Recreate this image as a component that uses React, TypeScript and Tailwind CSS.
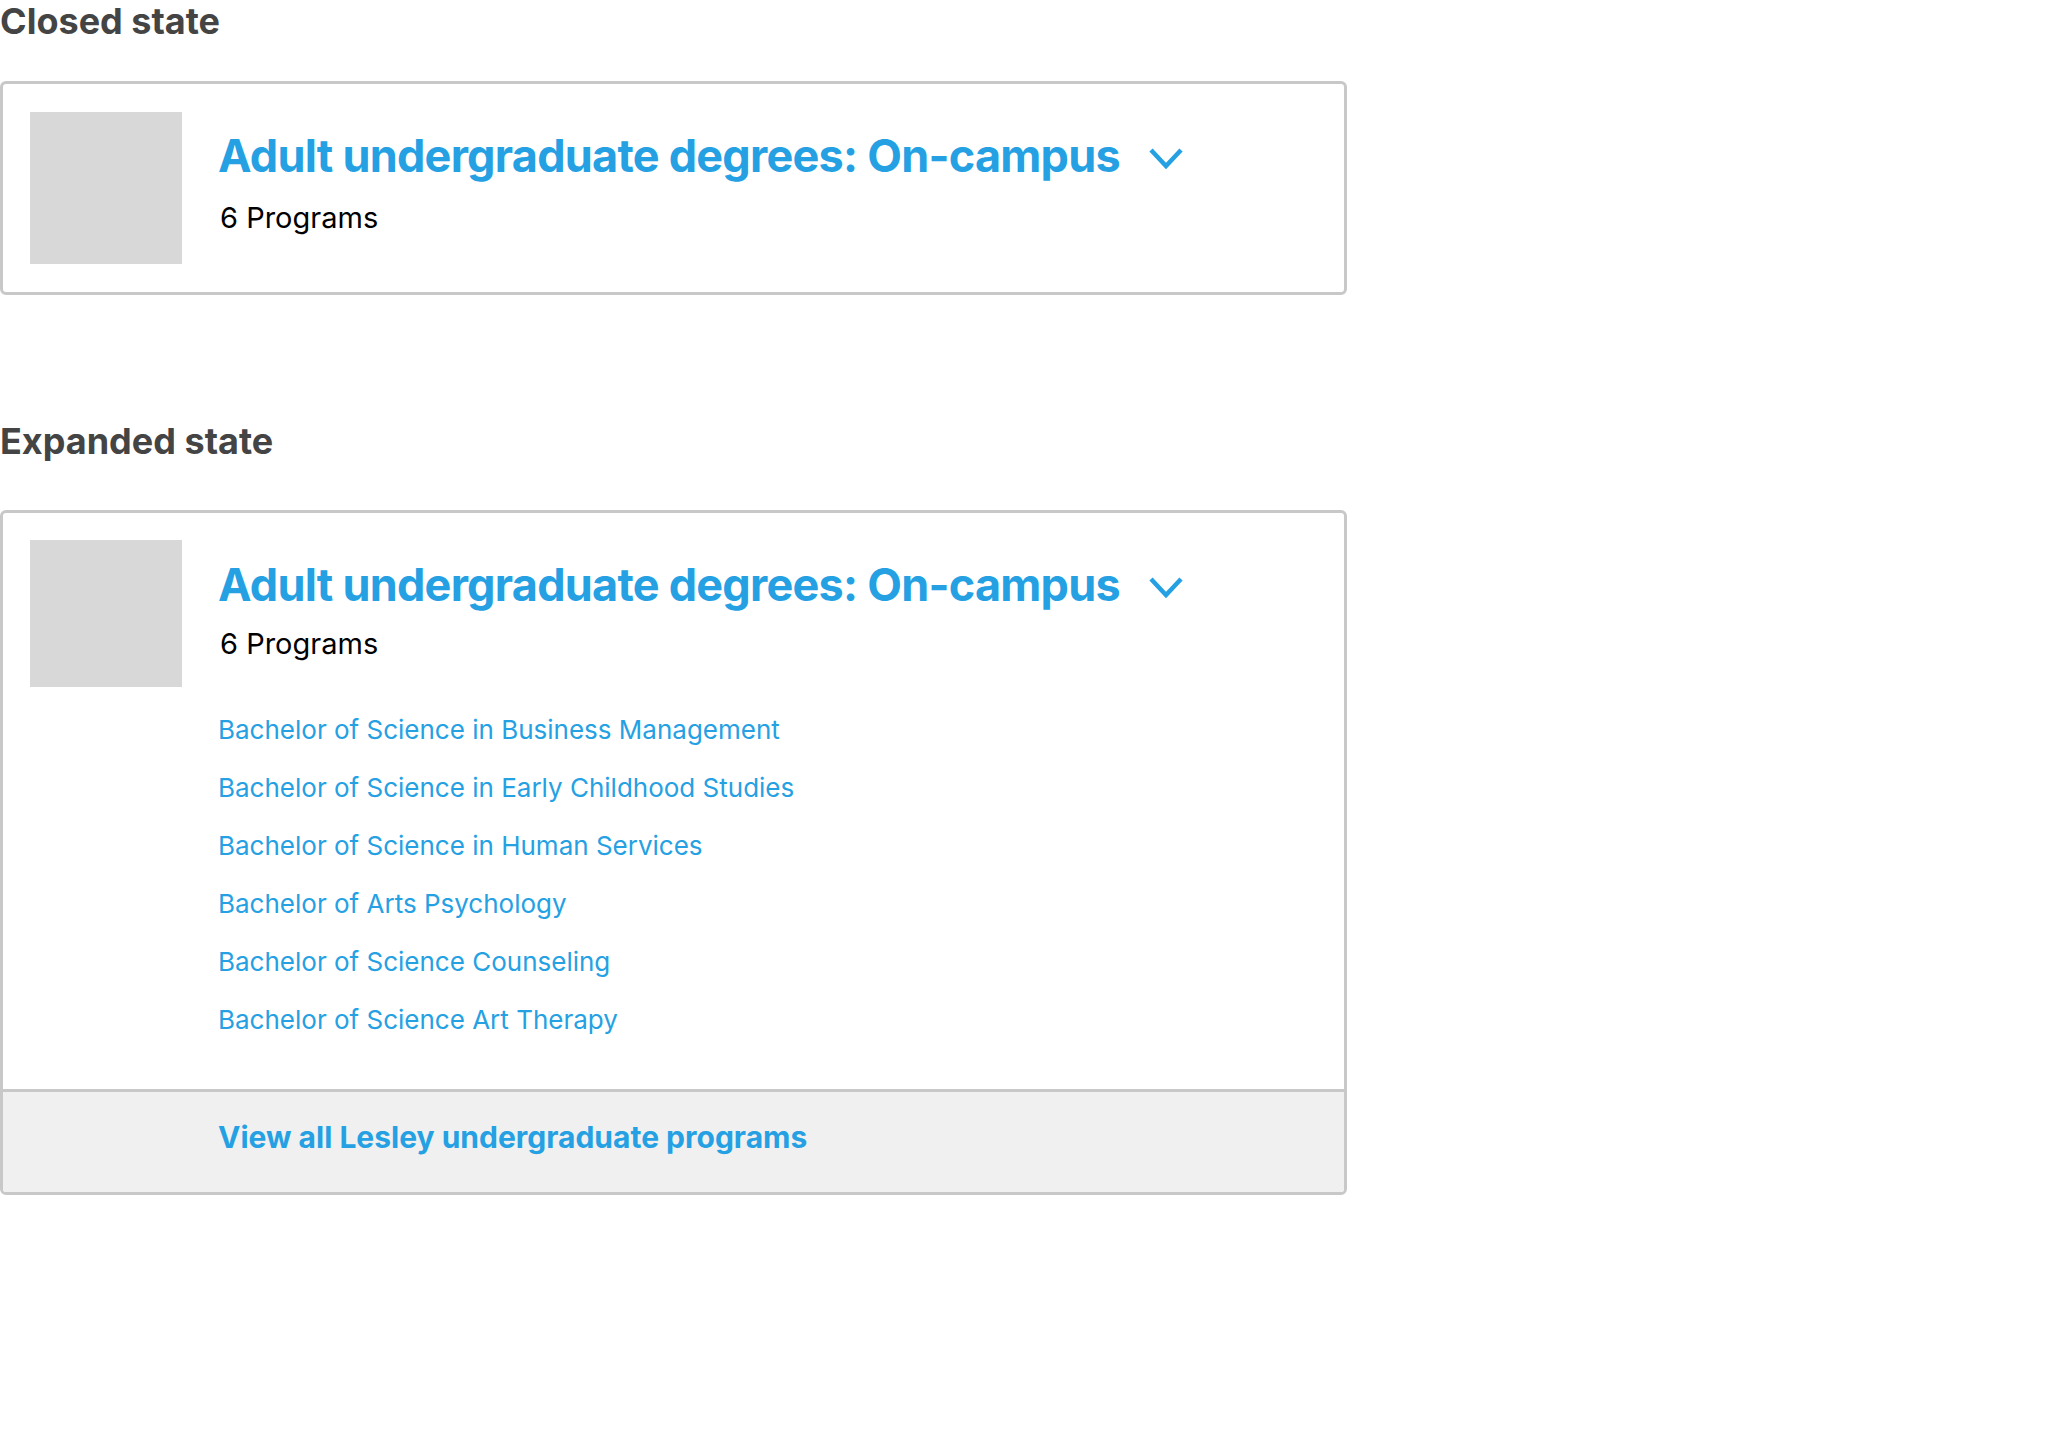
import React from "react";

const BLUE = "text-[#25a1e3]";

function Chevron() {
  return (
    <svg
      width="36"
      height="22"
      viewBox="0 0 36 22"
      className="ml-[28px] mt-[3px] shrink-0"
      fill="none"
    >
      <path
        d="M3 3 L18 19 L33 3"
        stroke="#25a1e3"
        strokeWidth="4.5"
        strokeLinecap="butt"
        strokeLinejoin="miter"
      />
    </svg>
  );
}

function Header({ titleMt, programsMt }: { titleMt: string; programsMt: string }) {
  return (
    <>
      <div className={`flex items-center ${titleMt}`}>
        <h3 className={`text-[45px] leading-[54px] font-bold ${BLUE} tracking-[-0.75px]`}>
          Adult undergraduate degrees: On-campus
        </h3>
        <Chevron />
      </div>
      <p className={`text-[29px] leading-[34px] text-black pl-[2px] ${programsMt}`}>6 Programs</p>
    </>
  );
}

const programs = [
  "Bachelor of Science in Business Management",
  "Bachelor of Science in Early Childhood Studies",
  "Bachelor of Science in Human Services",
  "Bachelor of Arts Psychology",
  "Bachelor of Science Counseling",
  "Bachelor of Science Art Therapy",
];

export default function App() {
  return (
    <div
      className="min-h-screen bg-white"
      style={{ fontFamily: "Inter, 'Noto Sans', sans-serif" }}
    >
      <h2 className="text-[36px] leading-[43px] font-bold text-[#444444]">Closed state</h2>

      <div className="mt-[38px] w-[1347px] rounded-[6px] border-[3px] border-[#c8c8c8] bg-white">
        <div className="flex pl-[27px] pt-[28px] pb-[28px]">
          <div className="w-[152px] h-[152px] bg-[#d8d8d8] shrink-0" />
          <div className="ml-[36px] flex flex-col">
            <Header titleMt="mt-[17px]" programsMt="mt-[18px]" />
          </div>
        </div>
      </div>

      <h2 className="mt-[125px] text-[36px] leading-[43px] font-bold text-[#444444]">Expanded state</h2>

      <div className="mt-[47px] w-[1347px] rounded-[6px] border-[3px] border-[#c8c8c8] bg-white overflow-hidden">
        <div className="flex pl-[27px] pt-[27px] pb-[40px]">
          <div className="w-[152px] h-[147px] bg-[#d8d8d8] shrink-0" />
          <div className="ml-[36px] flex flex-col">
            <Header titleMt="mt-[18px]" programsMt="mt-[15px]" />
            <ul className="mt-[40px] flex flex-col">
              {programs.map((p) => (
                <li key={p} className={`text-[26px] leading-[58px] ${BLUE}`}>
                  <a href="#">{p}</a>
                </li>
              ))}
            </ul>
          </div>
        </div>
        <div className="border-t-[3px] border-[#c8c8c8] bg-[#f0f0f0] pl-[215px] pt-[27px] pb-[37px]">
          <a href="#" className={`text-[30px] leading-[36px] font-bold ${BLUE}`}>
            View all Lesley undergraduate programs
          </a>
        </div>
      </div>
    </div>
  );
}
